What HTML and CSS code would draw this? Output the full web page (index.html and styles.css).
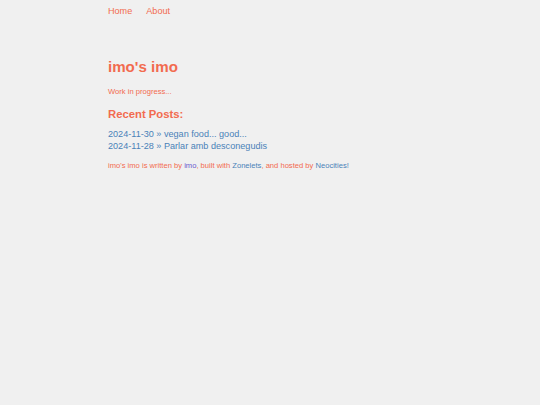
FILE: index.html
```html
<!DOCTYPE html>
<html lang="en">
<head>
<meta charset="utf-8">
<title>imo's imo</title>
<link rel="stylesheet" href="styles.css">
</head>
<body>
<div class="wrap">
  <nav class="nav">
    <a href="#" class="nav-link">Home</a>
    <a href="#" class="nav-link">About</a>
  </nav>
  <h1 class="title">imo's imo</h1>
  <p class="wip">Work in progress...</p>
  <h2 class="recent">Recent Posts:</h2>
  <ul class="posts">
    <li><a href="#" class="post-link">2024-11-30 » vegan food... good...</a></li>
    <li><a href="#" class="post-link">2024-11-28 » Parlar amb desconegudis</a></li>
  </ul>
  <footer class="footer">imo's imo is written by <a href="#" class="visited">imo</a>, built with <a href="#" class="flink">Zonelets</a>, and hosted by <a href="#" class="flink">Neocities!</a></footer>
</div>
</body>
</html>
```
FILE: styles.css
```css
html, body {
  margin: 0;
  padding: 0;
  background: #f0f0f0;
}
body {
  font-family: "Liberation Sans", Arial, sans-serif;
  color: #f26b4f;
}
.wrap {
  width: 324px;
  margin: 0 auto;
}
.nav {
  padding-top: 5px;
  display: flex;
  gap: 14px;
  font-size: 9.1px;
  line-height: 12px;
}
.nav-link {
  color: #f26b4f;
  text-decoration: none;
}
.title {
  margin: 40.5px 0 0;
  font-size: 15.1px;
  line-height: 18px;
  font-weight: bold;
  color: #f26b4f;
}
.wip {
  margin: 11px 0 0;
  font-size: 7.6px;
  line-height: 10px;
}
.recent {
  margin: 10px 0 0;
  font-size: 11.3px;
  line-height: 14px;
  font-weight: bold;
  color: #f26b4f;
}
.posts {
  list-style: none;
  margin: 7.5px 0 0;
  padding: 0;
  font-size: 9.1px;
  line-height: 12px;
}
.post-link {
  color: #4a82b8;
  text-decoration: none;
}
.footer {
  margin-top: 9.4px;
  font-size: 7.6px;
  line-height: 10px;
}
.visited {
  color: #6a5acd;
  text-decoration: none;
}
.flink {
  color: #4a82b8;
  text-decoration: none;
}
```
